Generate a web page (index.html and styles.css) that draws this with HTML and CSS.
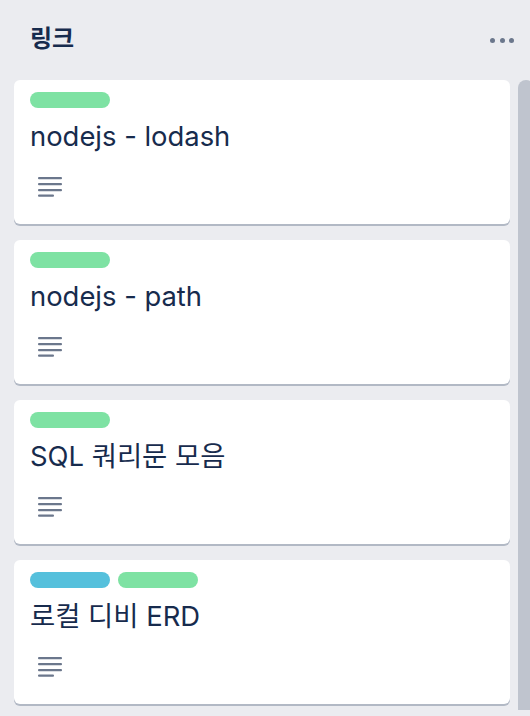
FILE: index.html
```html
<!DOCTYPE html>
<html lang="ko">
<head>
<meta charset="utf-8">
<link rel="stylesheet" href="styles.css">
</head>
<body>
<div class="list">
  <div class="list-header">
    <h2 class="list-title">링크</h2>
    <div class="more"><span></span><span></span><span></span></div>
  </div>
  <div class="list-body">
    <div class="cards">
      <div class="card">
        <div class="labels"><span class="label green"></span></div>
        <div class="card-title">nodejs - lodash</div>
        <div class="badges"><svg class="desc" width="24" height="20" viewBox="0 0 24 20"><rect x="0" y="0" width="24" height="2.2" rx="1"/><rect x="0" y="6" width="24" height="2.2" rx="1"/><rect x="0" y="12" width="24" height="2.2" rx="1"/><rect x="0" y="17.5" width="16" height="2.2" rx="1"/></svg></div>
      </div>
      <div class="card">
        <div class="labels"><span class="label green"></span></div>
        <div class="card-title">nodejs - path</div>
        <div class="badges"><svg class="desc" width="24" height="20" viewBox="0 0 24 20"><rect x="0" y="0" width="24" height="2.2" rx="1"/><rect x="0" y="6" width="24" height="2.2" rx="1"/><rect x="0" y="12" width="24" height="2.2" rx="1"/><rect x="0" y="17.5" width="16" height="2.2" rx="1"/></svg></div>
      </div>
      <div class="card">
        <div class="labels"><span class="label green"></span></div>
        <div class="card-title">SQL 쿼리문 모음</div>
        <div class="badges"><svg class="desc" width="24" height="20" viewBox="0 0 24 20"><rect x="0" y="0" width="24" height="2.2" rx="1"/><rect x="0" y="6" width="24" height="2.2" rx="1"/><rect x="0" y="12" width="24" height="2.2" rx="1"/><rect x="0" y="17.5" width="16" height="2.2" rx="1"/></svg></div>
      </div>
      <div class="card">
        <div class="labels"><span class="label blue"></span><span class="label green"></span></div>
        <div class="card-title">로컬 디비 ERD</div>
        <div class="badges"><svg class="desc" width="24" height="20" viewBox="0 0 24 20"><rect x="0" y="0" width="24" height="2.2" rx="1"/><rect x="0" y="6" width="24" height="2.2" rx="1"/><rect x="0" y="12" width="24" height="2.2" rx="1"/><rect x="0" y="17.5" width="16" height="2.2" rx="1"/></svg></div>
      </div>
    </div>
    <div class="scrollbar"></div>
  </div>
</div>
</body>
</html>
```

FILE: styles.css
```css
html, body {
  margin: 0;
  padding: 0;
  background: #ebecf0;
  overflow: hidden;
}
body {
  width: 530px;
  height: 716px;
  font-family: Inter, "Noto Sans CJK KR", sans-serif;
  color: #172b4d;
}
.list {
  display: flex;
  flex-direction: column;
}
.list-header {
  height: 80px;
  display: flex;
  align-items: center;
  justify-content: space-between;
  padding: 0 16px 0 30px;
  box-sizing: border-box;
}
.list-title {
  margin: 0;
  font-size: 24px;
  font-weight: 700;
  line-height: 30px;
  color: #172b4d;
  position: relative;
  top: -1px;
}
.more {
  display: flex;
  gap: 4.5px;
  align-items: center;
}
.more span {
  width: 5px;
  height: 5px;
  border-radius: 50%;
  background: #6b778c;
}
.list-body {
  display: flex;
  gap: 8px;
  padding-left: 14px;
}
.cards {
  width: 496px;
  flex: none;
  display: flex;
  flex-direction: column;
  gap: 16px;
}
.card {
  background: #fff;
  border-radius: 6px;
  box-shadow: 0 2px 0 rgba(9, 30, 66, 0.25);
  height: 144px;
  box-sizing: border-box;
  padding: 12px 16px 0;
}
.labels {
  display: flex;
  gap: 8px;
  height: 16px;
}
.label {
  width: 80px;
  height: 16px;
  border-radius: 8px;
}
.label.green { background: #7ee2a3; }
.label.blue { background: #55c0dc; }
.card-title {
  margin-top: 8px;
  font-size: 27.4px;
  line-height: 40px;
  color: #172b4d;
}
.badges {
  margin-top: 21px;
  padding-left: 8px;
  height: 20px;
  display: flex;
}
.desc { fill: #6b778c; display: block; }
.scrollbar {
  width: 16px;
  flex: none;
  height: 630px;
  background: #bfc4ce;
  border-radius: 8px 8px 0 0;
}
```
